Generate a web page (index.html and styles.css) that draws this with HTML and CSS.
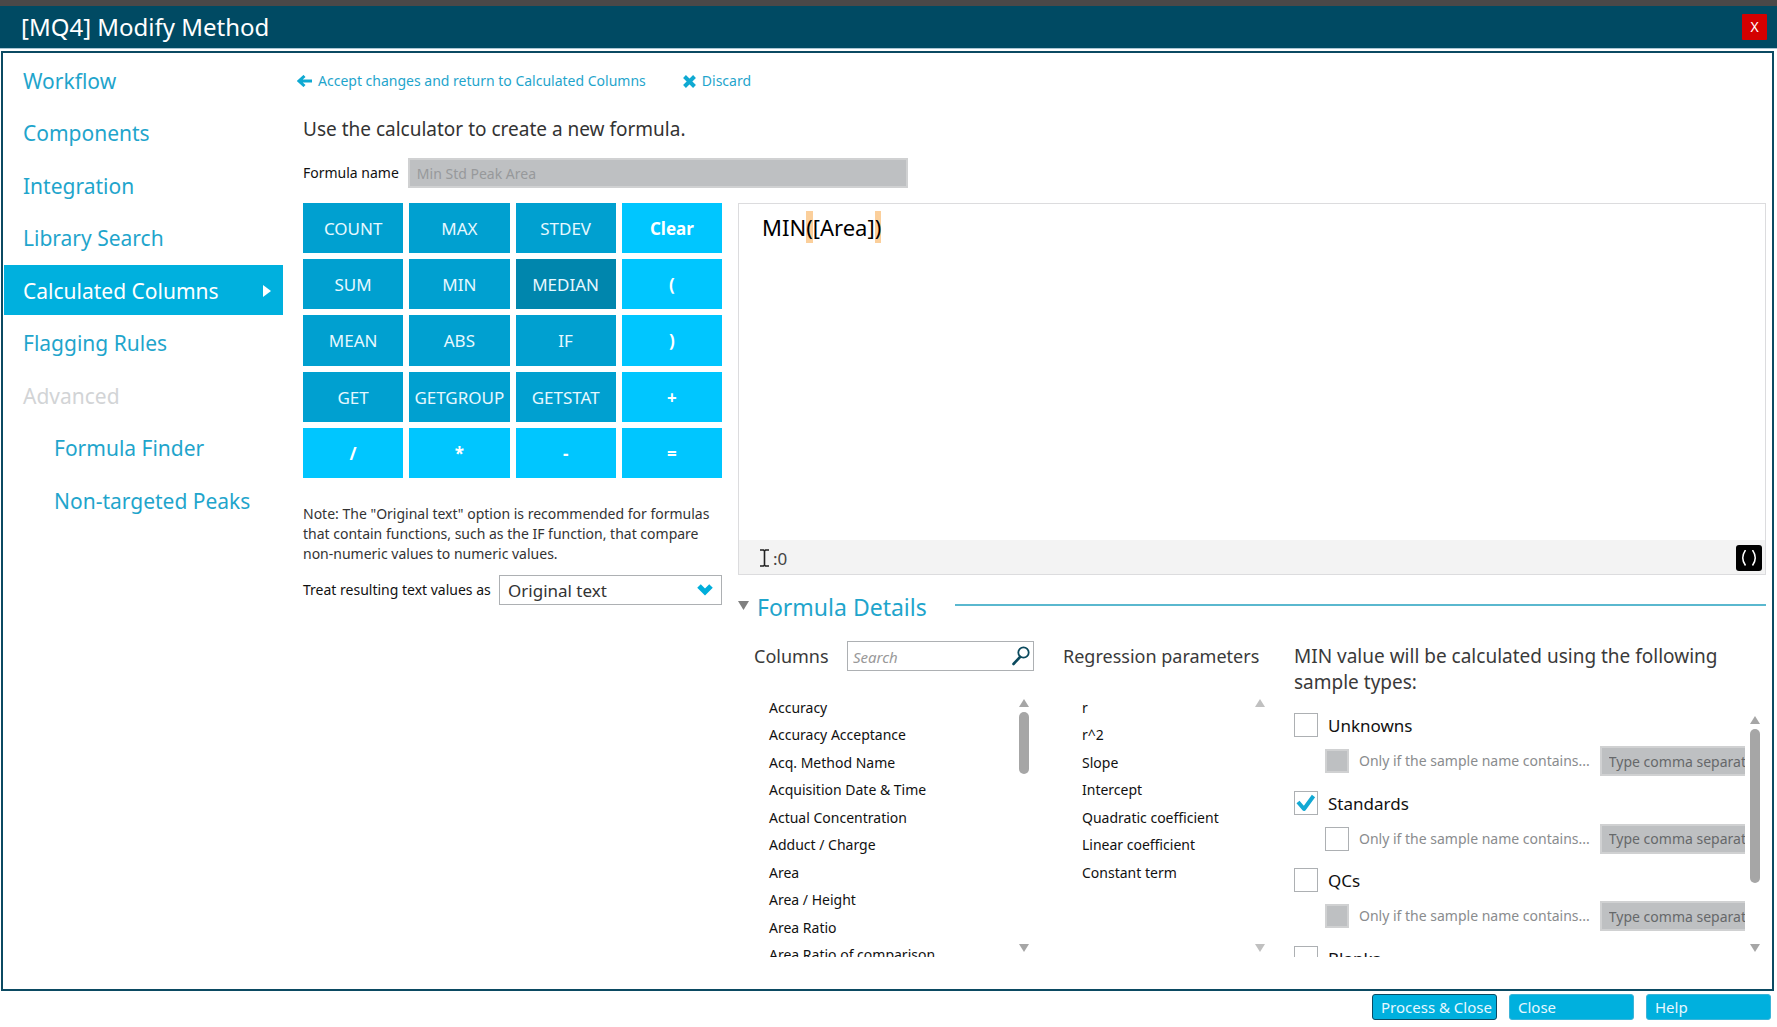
FILE: index.html
```html
<!DOCTYPE html>
<html lang="en">
<head>
<meta charset="utf-8">
<title>[MQ4] Modify Method</title>
<link rel="stylesheet" href="styles.css">
</head>
<body>
<header class="titlebar">
  <h1 class="titlebar-text">[MQ4] Modify Method</h1>
  <button class="titlebar-close" type="button" aria-label="Close window">X</button>
</header>

<div class="frame">
  <nav class="sidebar">
    <a class="nav-item" href="#">Workflow</a>
    <a class="nav-item" href="#">Components</a>
    <a class="nav-item" href="#">Integration</a>
    <a class="nav-item" href="#">Library Search</a>
    <a class="nav-item nav-active" href="#" aria-current="page">Calculated Columns
      <svg width="8" height="12" viewBox="0 0 8 12" aria-hidden="true"><path d="M0 0L8 6L0 12Z" fill="#fff"/></svg>
    </a>
    <a class="nav-item" href="#">Flagging Rules</a>
    <span class="nav-item nav-disabled">Advanced</span>
    <a class="nav-item nav-sub" href="#">Formula Finder</a>
    <a class="nav-item nav-sub" href="#">Non-targeted Peaks</a>
  </nav>

  <main class="main">
    <div class="actions">
      <a class="action" href="#">
        <svg width="15" height="12" viewBox="0 0 15 12" aria-hidden="true"><path d="M7.5 1L2 6L7.5 11M2.5 6H15" fill="none" stroke="#0fa9d2" stroke-width="3"/></svg>
        Accept changes and return to Calculated Columns
      </a>
      <a class="action" href="#">
        <svg width="13" height="13" viewBox="0 0 13 13" aria-hidden="true"><path d="M1.5 1.5L11.5 11.5M11.5 1.5L1.5 11.5" fill="none" stroke="#0fa9d2" stroke-width="4"/></svg>
        Discard
      </a>
    </div>

    <div class="content">
      <h2 class="intro">Use the calculator to create a new formula.</h2>
      <div class="name-row">
        <label for="fname">Formula name</label>
        <input class="field field-disabled name-input" id="fname" type="text" value="Min Std Peak Area" disabled>
      </div>

      <div class="work">
        <section class="calc">
          <div class="keys">
            <button class="key" type="button">COUNT</button>
            <button class="key" type="button">MAX</button>
            <button class="key" type="button">STDEV</button>
            <button class="key key-op" type="button">Clear</button>
            <button class="key" type="button">SUM</button>
            <button class="key" type="button">MIN</button>
            <button class="key key-hover" type="button">MEDIAN</button>
            <button class="key key-op" type="button">(</button>
            <button class="key" type="button">MEAN</button>
            <button class="key" type="button">ABS</button>
            <button class="key" type="button">IF</button>
            <button class="key key-op" type="button">)</button>
            <button class="key" type="button">GET</button>
            <button class="key" type="button">GETGROUP</button>
            <button class="key" type="button">GETSTAT</button>
            <button class="key key-op" type="button">+</button>
            <button class="key key-op" type="button">/</button>
            <button class="key key-op" type="button">*</button>
            <button class="key key-op" type="button">-</button>
            <button class="key key-op" type="button">=</button>
          </div>
          <p class="note">Note: The "Original text" option is recommended for formulas<br>that contain functions, such as the IF function, that compare<br>non-numeric values to numeric values.</p>
          <div class="treat-row">
            <label for="treat">Treat resulting text values as</label>
            <span class="select-wrap">
              <select class="select" id="treat"><option>Original text</option></select>
              <svg class="select-arrow" width="16" height="12" viewBox="0 0 16 12" aria-hidden="true"><path d="M2 2L8 8L14 2" fill="none" stroke="#00aedb" stroke-width="5"/></svg>
            </span>
          </div>
        </section>

        <section class="right">
          <div class="editor">
            <div class="editor-text" contenteditable="true" role="textbox" aria-label="Formula" spellcheck="false">MIN<mark>(</mark>[Area]<mark>)</mark></div>
            <div class="status">
              <svg width="9" height="18" viewBox="0 0 9 18" aria-hidden="true"><path d="M0 1H3.5L4.5 2L5.5 1H9M0 17H3.5L4.5 16L5.5 17H9M4.5 2V16" fill="none" stroke="#222" stroke-width="1.6"/></svg>
              <span class="status-pos">:0</span>
              <span class="badge"><svg width="16" height="16" viewBox="0 0 16 16" role="img" aria-label="Brackets match"><path d="M4.5 0Q-1 8 4.5 15.5M11.5 0Q17 8 11.5 15.5" fill="none" stroke="#fff" stroke-width="1.5"/></svg></span>
            </div>
          </div>

          <div class="details-head">
            <svg class="caret" width="11" height="9" viewBox="0 0 11 9" aria-hidden="true"><path d="M0 0H11L5.5 9Z" fill="#808080"/></svg>
            <h2 class="details-title">Formula Details</h2>
            <span class="rule"></span>
          </div>

          <div class="details">
            <section class="pane">
              <div class="pane-head">
                <label class="pane-title" for="search">Columns</label>
                <span class="search">
                  <input class="search-input" id="search" type="text" placeholder="Search">
                  <svg class="search-icon" width="18" height="20" viewBox="0 0 18 20" aria-hidden="true"><circle cx="11.5" cy="6.5" r="5.2" fill="none" stroke="#0b4a5e" stroke-width="1.8"/><path d="M8 11L1.5 18" stroke="#0b4a5e" stroke-width="2.6" stroke-linecap="round"/></svg>
                </span>
              </div>
              <div class="scroll scroll-columns">
                <ul class="list">
                  <li>Accuracy</li><li>Accuracy Acceptance</li><li>Acq. Method Name</li><li>Acquisition Date &amp; Time</li><li>Actual Concentration</li><li>Adduct / Charge</li><li>Area</li><li>Area / Height</li><li>Area Ratio</li><li>Area Ratio of comparison</li>
                </ul>
                <div class="bar" aria-hidden="true"><i class="up"></i><i class="thumb thumb-short"></i><i class="down"></i></div>
              </div>
            </section>

            <section class="pane">
              <div class="pane-head"><h3 class="pane-title">Regression parameters</h3></div>
              <div class="scroll scroll-params">
                <ul class="list">
                  <li>r</li><li>r^2</li><li>Slope</li><li>Intercept</li><li>Quadratic coefficient</li><li>Linear coefficient</li><li>Constant term</li>
                </ul>
                <div class="bar bar-idle" aria-hidden="true"><i class="up"></i><i class="down"></i></div>
              </div>
            </section>

            <section class="pane">
              <h3 class="samples-title">MIN value will be calculated using the following sample types:</h3>
              <div class="scroll scroll-samples">
                <div class="samples">
                  <div class="sample">
                    <label class="check-row"><input class="check" type="checkbox"><span class="check-text">Unknowns</span></label>
                    <div class="filter"><label class="filter-label"><input class="check" type="checkbox" disabled>Only if the sample name contains...</label><input class="field field-disabled filter-input" type="text" placeholder="Type comma separated text" aria-label="Unknowns name filter" disabled></div>
                  </div>
                  <div class="sample">
                    <label class="check-row"><input class="check" type="checkbox" checked><span class="check-text">Standards</span></label>
                    <div class="filter"><label class="filter-label"><input class="check" type="checkbox">Only if the sample name contains...</label><input class="field field-disabled filter-input" type="text" placeholder="Type comma separated text" aria-label="Standards name filter" disabled></div>
                  </div>
                  <div class="sample">
                    <label class="check-row"><input class="check" type="checkbox"><span class="check-text">QCs</span></label>
                    <div class="filter"><label class="filter-label"><input class="check" type="checkbox" disabled>Only if the sample name contains...</label><input class="field field-disabled filter-input" type="text" placeholder="Type comma separated text" aria-label="QCs name filter" disabled></div>
                  </div>
                  <div class="sample">
                    <label class="check-row"><input class="check" type="checkbox"><span class="check-text">Blanks</span></label>
                  </div>
                </div>
                <div class="bar" aria-hidden="true"><i class="up"></i><i class="thumb thumb-long"></i><i class="down"></i></div>
              </div>
            </section>
          </div>
        </section>
      </div>
    </div>
  </main>
</div>

<footer class="footer">
  <button class="foot-btn foot-default" type="button">Process &amp; Close</button>
  <button class="foot-btn" type="button">Close</button>
  <button class="foot-btn" type="button">Help</button>
</footer>
</body>
</html>
```
FILE: styles.css
```css
* { box-sizing: border-box; }

body {
  margin: 0;
  height: 100vh;
  display: flex;
  flex-direction: column;
  background: #fff;
  color: #111;
  font: 14px/20px "Noto Sans", "Open Sans", sans-serif;
}

h1, h2, h3, p, ul { margin: 0; padding: 0; font-weight: 400; }
button, input, select { font: inherit; margin: 0; }
svg { flex: none; display: block; }
a { text-decoration: none; }

/* Title bar */
.titlebar {
  flex: none;
  display: flex;
  align-items: center;
  justify-content: space-between;
  height: 49px;
  padding: 0 10px 0 21px;
  border-top: 6px solid #4a4848;
  border-bottom: 1px solid #a9c6d3;
  background: #004a63;
}
.titlebar-text { color: #fff; font-size: 24px; line-height: 42px; }
.titlebar-close {
  width: 25px;
  height: 26px;
  padding: 0;
  border: 0;
  border-radius: 1px;
  background: #d40000;
  color: #fff;
}

/* Framed body */
.frame {
  flex: 1;
  min-height: 0;
  display: flex;
  margin: 2px 3px 0 1px;
  border: 2px solid #0b4a62;
}

.sidebar {
  flex: none;
  width: 279px;
  height: 472px;
  margin-left: 1px;
  padding-top: 2px;
  display: flex;
  flex-direction: column;
  justify-content: space-between;
}
.nav-item {
  display: flex;
  align-items: center;
  justify-content: space-between;
  height: 50px;
  padding: 1px 12px 0 19px;
  color: #1fa5cc;
  font-size: 21px;
}
.nav-active { background: #00b0de; color: #fff; }
.nav-disabled { color: #d2d4d6; }
.nav-sub { padding-left: 50px; }

.main {
  flex: 1;
  min-width: 0;
  display: flex;
  flex-direction: column;
  padding: 18px 6px 32px 14px;
}
.actions { display: flex; gap: 37px; }
.action { display: flex; align-items: center; gap: 6px; color: #1fa5cc; }

.content {
  flex: 1;
  min-height: 0;
  display: flex;
  flex-direction: column;
  padding-left: 6px;
}
.intro { margin-top: 25px; color: #333; font-size: 19px; line-height: 26px; }
.name-row { display: flex; align-items: center; gap: 9px; margin-top: 16px; }
.field { height: 30px; padding: 0 7px; border: 2px solid #d0d1d2; background: #bec0c2; }
.field-disabled { color: #97999b; }
.name-input { width: 500px; }

.work {
  flex: 1;
  min-height: 0;
  display: grid;
  grid-template-columns: 419px minmax(0, 1fr);
  gap: 16px;
  margin-top: 15px;
}

/* Calculator */
.keys { display: grid; grid-template-columns: repeat(4, 1fr); grid-auto-rows: 1fr; gap: 6px; height: 275px; }
.key {
  padding: 2px 0 0;
  border: 0;
  background: #00a0d0;
  color: #e6f8ff;
  font-size: 17px;
}
.key-op { background: #00c6ff; color: #fff; font-weight: 700; }
.key-hover { background: #0086ad; }
.note { margin-top: 26px; color: #333; white-space: nowrap; }
.treat-row { display: flex; align-items: center; justify-content: space-between; margin-top: 11px; }
.select-wrap { position: relative; display: block; }
.select {
  appearance: none;
  display: block;
  width: 223px;
  height: 30px;
  padding: 2px 8px 0;
  border: 1px solid #adb0b3;
  border-radius: 0;
  background: #fff;
  color: #333;
  font-size: 17px;
}
.select-arrow { position: absolute; right: 9px; top: 9px; pointer-events: none; }

/* Formula editor */
.right { min-height: 0; display: flex; flex-direction: column; }
.editor {
  flex: none;
  display: flex;
  flex-direction: column;
  height: 372px;
  border: 1px solid #dcdcde;
}
.editor-text { flex: 1; padding: 8px 23px; color: #000; font-size: 22px; line-height: 30px; outline: 0; }
.editor-text mark { padding: 1px 0; background: #fbcf9b; color: inherit; }
.status {
  display: flex;
  align-items: center;
  gap: 4px;
  height: 34px;
  padding: 1px 3px 0 21px;
  background: #f3f3f3;
}
.status-pos { padding-top: 2px; color: #444; font-size: 17px; }
.badge {
  display: grid;
  place-items: center;
  width: 26px;
  height: 26px;
  margin-left: auto;
  border-radius: 3px;
  background: #000;
}

/* Formula details */
.details-head { display: flex; align-items: center; gap: 8px; height: 32px; margin-top: 16px; }
.details-title { color: #1fa5cc; font-size: 23px; line-height: 32px; }
.caret, .rule { margin-bottom: 4px; }
.rule { flex: 1; height: 2px; margin-left: 20px; background: #5ab8cf; }

.details {
  flex: 1;
  min-height: 0;
  display: grid;
  grid-template-columns: 280px 202px minmax(0, 1fr);
  grid-template-rows: minmax(0, 1fr);
  gap: 29px;
  margin-top: 18px;
  padding-left: 16px;
}
.pane { min-height: 0; display: flex; flex-direction: column; }
.pane-head { display: flex; align-items: center; justify-content: space-between; height: 30px; }
.pane-title, .samples-title { color: #3a3a3a; font-size: 18px; line-height: 26px; }
.pane-title { white-space: nowrap; }
.search { position: relative; display: block; }
.search-input { display: block; width: 187px; height: 30px; padding: 2px 30px 0 5px; border: 1px solid #adb0b3; }
.search-input::placeholder { color: #999; font-size: 15px; font-style: italic; opacity: 1; }
.search-icon { position: absolute; right: 4px; top: 5px; }

.scroll { flex: 1; min-height: 0; display: flex; overflow: hidden; }
.scroll-columns { margin-top: 23px; padding: 0 5px 0 15px; }
.scroll-params { margin-top: 23px; padding-left: 19px; }
.scroll-columns .bar, .scroll-params .bar { margin-top: 5px; }
.list {
  flex: 1;
  height: 275px;
  display: grid;
  grid-template-rows: repeat(10, 1fr);
  align-items: center;
  list-style: none;
  white-space: nowrap;
}

.bar { flex: none; display: flex; flex-direction: column; width: 10px; margin-bottom: 5px; color: #a6a6a6; }
.bar-idle { color: #c0c0c0; }
.up, .down { height: 8px; background: currentColor; }
.up { clip-path: polygon(50% 0, 100% 100%, 0 100%); }
.down { clip-path: polygon(0 0, 100% 0, 50% 100%); margin-top: auto; }
.thumb { margin-top: 5px; border-radius: 5px; background: currentColor; }
.thumb-short { height: 62px; }
.thumb-long { height: 154px; }

/* Sample types */
.samples-title { margin-top: 2px; font-size: 19px; }
.scroll-samples { gap: 5px; margin-top: 18px; padding-right: 6px; }
.scroll-samples .bar { margin-top: 3px; }
.samples { flex: 1; min-width: 0; height: 310px; display: grid; grid-template-rows: repeat(4, 1fr); overflow: hidden; }
.check-row { display: flex; align-items: center; gap: 10px; height: 24px; color: #111; font-size: 17px; }
.check-text { padding-top: 2px; }
.filter { display: flex; align-items: center; gap: 10px; margin: 9px 0 0 31px; }
.filter-label { flex: none; display: flex; align-items: center; gap: 10px; color: #8a8c8e; }
.filter-input { flex: none; width: 220px; }
.filter-input::placeholder { color: #66686a; opacity: 1; }
.check {
  appearance: none;
  flex: none;
  width: 24px;
  height: 24px;
  border: 1px solid #adb0b3;
  background: #fff;
}
.check:disabled { border: 2px solid #d0d1d2; background: #bec0c2; }
.check:checked {
  background: #fff url("data:image/svg+xml,%3Csvg xmlns='http://www.w3.org/2000/svg' viewBox='0 0 22 22'%3E%3Cpath d='M3 10L9 17L18.5 4' fill='none' stroke='%2312a9d4' stroke-width='4' stroke-linejoin='round'/%3E%3C/svg%3E") center / 22px 22px no-repeat;
}

/* Footer */
.footer { flex: none; display: flex; justify-content: flex-end; gap: 12px; padding: 3px 6px 7px; }
.foot-btn {
  width: 125px;
  height: 26px;
  padding: 0 8px;
  border: 1px solid #3cb4d8;
  border-radius: 3px;
  background: #00b0de;
  color: #e6f8ff;
  font-size: 15px;
  line-height: 22px;
  text-align: left;
  white-space: nowrap;
}
.foot-default { border-color: #0b4a62; }
```
